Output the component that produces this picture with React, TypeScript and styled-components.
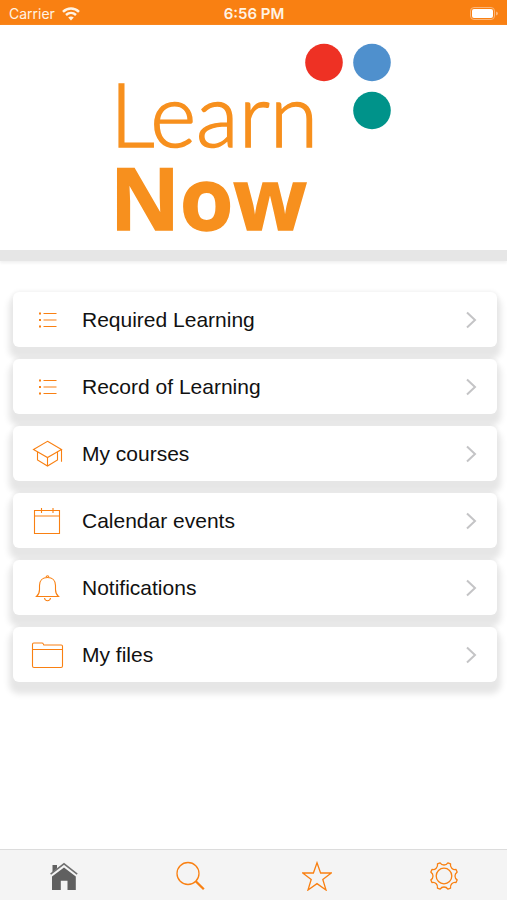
import React from "react";
import styled, { createGlobalStyle } from "styled-components";

const ORANGE = "#f98012";
const LOGO_ORANGE = "#f7901e";

const GlobalStyle = createGlobalStyle`
  *, *::before, *::after { box-sizing: border-box; }
  body {
    margin: 0;
    background: #fff;
    color: #111;
    font-family: "Liberation Sans", Helvetica, Arial, sans-serif;
  }
`;

const Screen = styled.div`
  display: flex;
  flex-direction: column;
  min-height: 100vh;
`;

const StatusBar = styled.div`
  display: grid;
  grid-template-columns: 1fr auto 1fr;
  align-items: center;
  height: 25px;
  padding: 2px 8px 0 9px;
  background: ${ORANGE};
  color: #fff3e4;
  font-family: Inter, Roboto, sans-serif;
  font-size: 14px;
  line-height: 20px;
`;

const Carrier = styled.div`
  display: flex;
  align-items: center;
  gap: 7px;
`;

const Clock = styled.time`
  font-size: 15px;
  font-weight: 600;
`;

const Battery = styled.div`
  display: flex;
  justify-content: flex-end;
`;

const Banner = styled.header`
  display: flex;
  justify-content: center;
  height: 236px;
  border-bottom: 11px solid #e6e6e6;
  box-shadow: 0 2px 3px #f0f0f0;
`;

const LogoSvg = styled.svg`
  display: block;
  overflow: visible;
`;

const LogoLight = styled.text`
  font-family: Lato, "Open Sans", sans-serif;
  font-size: 88px;
  font-weight: 300;
  fill: ${LOGO_ORANGE};
  stroke: ${LOGO_ORANGE};
  stroke-width: 1.5px;
`;

const LogoBold = styled.text`
  font-family: "Open Sans", "Noto Sans", sans-serif;
  font-size: 86px;
  font-weight: 700;
  fill: ${LOGO_ORANGE};
  stroke: ${LOGO_ORANGE};
  stroke-width: 1.5px;
`;

const Main = styled.main`
  flex: 1;
  padding: 31px 10px 40px 13px;
`;

const MenuList = styled.ul`
  display: flex;
  flex-direction: column;
  gap: 12px;
  margin: 0;
  padding: 0;
  list-style: none;
`;

const MenuCard = styled.a`
  display: flex;
  align-items: center;
  height: 55px;
  padding: 0 20px 0 17px;
  border-radius: 6px;
  background: #fff;
  box-shadow: 0 8px 6px 4px #e6e6e6, 0 0 4px 1px rgba(0, 0, 0, 0.05);
  color: inherit;
  font-size: 21px;
  line-height: 28px;
  text-decoration: none;
`;

const MenuLabel = styled.span`
  flex: 1;
  padding-left: 17px;
`;

const LineIcon = styled.svg`
  display: block;
  flex: none;
  fill: none;
  stroke: ${ORANGE};
  stroke-width: 1.1;
`;

const Chevron = styled(LineIcon)`
  stroke: #c4c4c6;
  stroke-width: 2;
`;

const TabBar = styled.nav`
  display: grid;
  grid-template-columns: repeat(4, 1fr);
  position: sticky;
  bottom: 0;
  height: 51px;
  border-top: 1px solid #dcdcdc;
  background: #f4f4f4;
`;

const TabButton = styled.button`
  display: flex;
  align-items: center;
  justify-content: center;
  padding: 2px 0 0;
  border: 0;
  background: none;
  cursor: pointer;
`;

const ListGlyph = () => (
  <>
    <path d="M13.5 8.5h13M13.5 15h13M13.5 21.5h13" />
    <path d="M9 8.5h2M9 15h2M9 21.5h2" strokeWidth="1.8" />
  </>
);

const CourseGlyph = () => (
  <>
    <path d="M17.5 2.3 31.5 10.5 17.5 18.5 3.5 10.5Z" />
    <path d="M7.5 12.8V21l10 6 10-6v-8.2M17.5 18.5V27M31.5 10.5v12.3" />
  </>
);

const CalendarGlyph = () => (
  <path d="M4.5 4.5h25v23h-25ZM4.5 10h25M11.5 2v5M23 2v5" />
);

const BellGlyph = () => (
  <>
    <path d="M6.5 23.5c2.3-2 3-4 3-7v-4c0-5 3.2-8 8-8s8 3 8 8v4c0 3 .7 5 3 7Z" />
    <path d="M14.5 25c.3 1.8 1.5 2.7 3 2.7s2.7-.9 3-2.7M16.2 4c0-1.7 2.6-1.7 2.6 0" />
  </>
);

const FolderGlyph = () => (
  <path d="M2.5 26V4.2q0-1.200 1.200-1.200h8.300q1 0 1.300.9l.5 1.100h17.500q1.200 0 1.200 1.200V26q0 1.500-1.500 1.500H4q-1.500 0-1.500-1.500ZM2.500 9.500h30" />
);

const menu = [
  { label: "Required Learning", glyph: <ListGlyph /> },
  { label: "Record of Learning", glyph: <ListGlyph /> },
  { label: "My courses", glyph: <CourseGlyph /> },
  { label: "Calendar events", glyph: <CalendarGlyph /> },
  { label: "Notifications", glyph: <BellGlyph /> },
  { label: "My files", glyph: <FolderGlyph /> },
];

// Eight-toothed cog with rounded hollows between the teeth.
const gearPath = (() => {
  const point = (deg: number) => {
    const a = (deg * Math.PI) / 180;
    return `${(15 + 13.7 * Math.cos(a)).toFixed(2)} ${(15 + 13.7 * Math.sin(a)).toFixed(2)}`;
  };
  let d = "";
  for (let i = 0; i < 8; i++) {
    const tooth = 22.5 + i * 45;
    d += `${i === 0 ? "M" : "L"}${point(tooth - 6)}L${point(tooth + 6)}A4.6 4.6 0 0 0 ${point(tooth + 39)}`;
  }
  return d + "Z";
})();

const tabs = [
  {
    label: "Home",
    glyph: (
      <g fill="#606060" stroke="none">
        <path d="M4.500 4h4.500v3.500L4.500 11.500Z" />
        <path d="M16 6.500 27.800 15.500V29H19.500V19.800H12.800V29H4V15.500Z" />
        <path d="M2.600 13.200 16 2.800 29.200 13.200" fill="none" stroke="#707070" strokeWidth="1.5" />
      </g>
    ),
  },
  {
    label: "Search",
    glyph: (
      <>
        <circle cx="13" cy="12.5" r="11" strokeWidth="1.3" />
        <path d="M20.500 20 28.800 28.300" strokeWidth="2.3" />
      </>
    ),
  },
  {
    label: "Favourites",
    glyph: (
      <path
        d="M15 1.800 18.600 12H29.300L20.800 18.400 24 29 15 22.600 6 29 9.200 18.400.7 12H11.400Z"
        strokeWidth="1.3"
      />
    ),
  },
  {
    label: "Settings",
    glyph: (
      <g strokeWidth="1.3" strokeLinejoin="round">
        <path d={gearPath} />
        <circle cx="15" cy="15" r="7.8" />
      </g>
    ),
  },
];

export default function App() {
  return (
    <Screen>
      <GlobalStyle />
      <StatusBar>
        <Carrier>
          <span>Carrier</span>
          <svg width="18" height="14" viewBox="0 0 18 14" fill="none" stroke="#fff3e4" strokeWidth="2.5" aria-hidden="true">
            <path d="M1 4.800C5.500.5 12.500.5 17 4.800M4 8c3-2.700 7-2.700 10 0" />
            <path d="M9 13.500 6.200 10.600c1.700-1.400 3.900-1.400 5.600 0Z" fill="#fff3e4" stroke="none" />
          </svg>
        </Carrier>
        <Clock>6:56 PM</Clock>
        <Battery>
          <svg width="29" height="13" viewBox="0 0 29 13" role="img" aria-label="Battery full">
            <rect x=".5" y=".5" width="24" height="12" rx="3.5" fill="none" stroke="#fbb67a" />
            <rect x="2" y="2" width="21" height="9" rx="2" fill="#fff" />
            <path d="M26 4.500q2 .5 2 2t-2 2Z" fill="#fcb678" />
          </svg>
        </Battery>
      </StatusBar>

      <Banner>
        <LogoSvg width="307" height="225" viewBox="0 0 307 225" role="img" aria-label="Learn Now">
          <LogoLight x="10" y="122">Learn</LogoLight>
          <LogoBold x="10" y="205">Now</LogoBold>
          <circle cx="224" cy="37.5" r="18.8" fill="#ee3124" />
          <circle cx="272" cy="37.5" r="18.8" fill="#4f90cd" />
          <circle cx="272" cy="85.5" r="18.8" fill="#00938a" />
        </LogoSvg>
      </Banner>

      <Main>
        <MenuList>
          {menu.map((item) => (
            <li key={item.label}>
              <MenuCard href="#">
                <LineIcon width="35" height="30" viewBox="0 0 35 30" aria-hidden="true">
                  {item.glyph}
                </LineIcon>
                <MenuLabel>{item.label}</MenuLabel>
                <Chevron width="12" height="18" viewBox="0 0 12 18" aria-hidden="true">
                  <path d="M2 1.500 10 9 2 16.500" />
                </Chevron>
              </MenuCard>
            </li>
          ))}
        </MenuList>
      </Main>

      <TabBar>
        {tabs.map((tab) => (
          <TabButton key={tab.label} type="button" aria-label={tab.label}>
            <LineIcon width="30" height="30" viewBox="0 0 30 30" aria-hidden="true">
              {tab.glyph}
            </LineIcon>
          </TabButton>
        ))}
      </TabBar>
    </Screen>
  );
}
